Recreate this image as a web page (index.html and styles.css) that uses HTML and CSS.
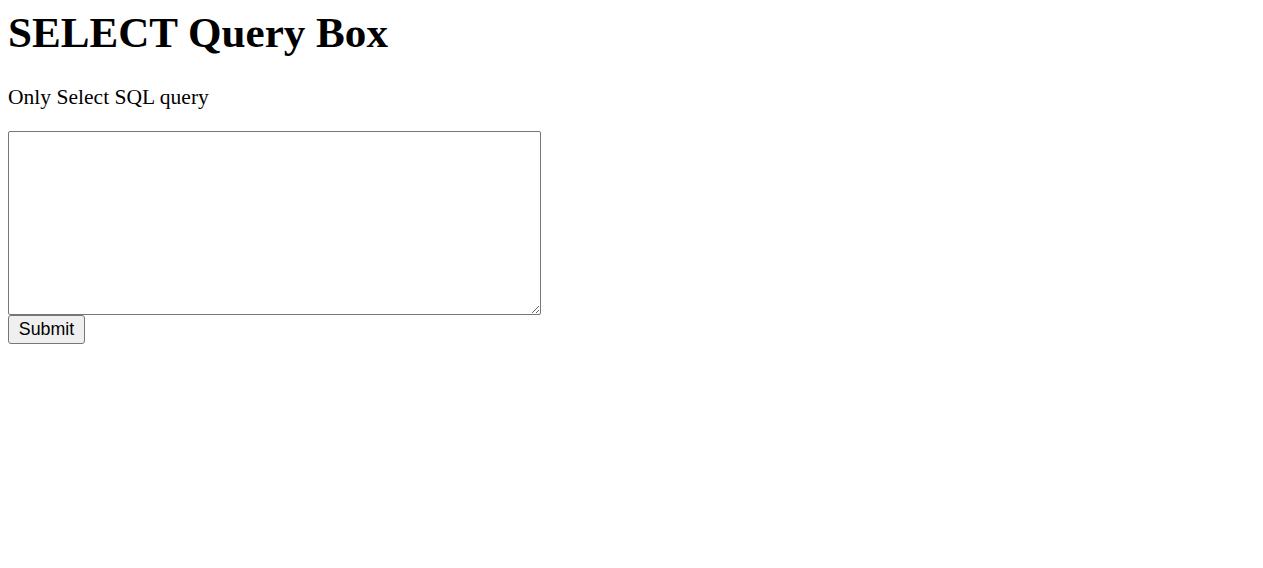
FILE: index.html
```html
<!DOCTYPE html>
<html>
<head>
<meta charset="utf-8">
<title>SELECT Query Box</title>
<link rel="stylesheet" href="styles.css">
</head>
<body>
<h1 class="title">SELECT Query Box</h1>
<p class="lead">Only Select SQL query</p>
<form class="query-form">
<textarea class="query-input" name="query"></textarea>
<button class="submit-btn" type="submit">Submit</button>
</form>
</body>
</html>
```
FILE: styles.css
```css
html, body {
  background: #fff;
}
body {
  margin: 0;
  padding: 0 8px;
  font-family: "Liberation Serif", "Times New Roman", serif;
  color: #000;
}
.title {
  margin: 0;
  padding-top: 8px;
  font-size: 43.1px;
  font-weight: bold;
  line-height: 49px;
}
.lead {
  margin: 28px 0 0 0;
  font-size: 21.55px;
  line-height: 24px;
}
.query-form {
  margin-top: 22px;
}
.query-input {
  display: block;
  box-sizing: border-box;
  width: 533px;
  height: 184px;
  margin: 0;
  border: 1px solid #767676;
  border-radius: 2px;
  padding: 2px;
  font-family: "Liberation Mono", monospace;
  font-size: 17px;
  resize: both;
}
.submit-btn {
  display: block;
  box-sizing: border-box;
  width: 77px;
  height: 29px;
  margin: 0;
  padding: 0 8px;
  font-family: "Liberation Sans", Arial, sans-serif;
  font-size: 17.78px;
  color: #000;
  background: #efefef;
  border: 1px solid #767676;
  border-radius: 3px;
}
```
